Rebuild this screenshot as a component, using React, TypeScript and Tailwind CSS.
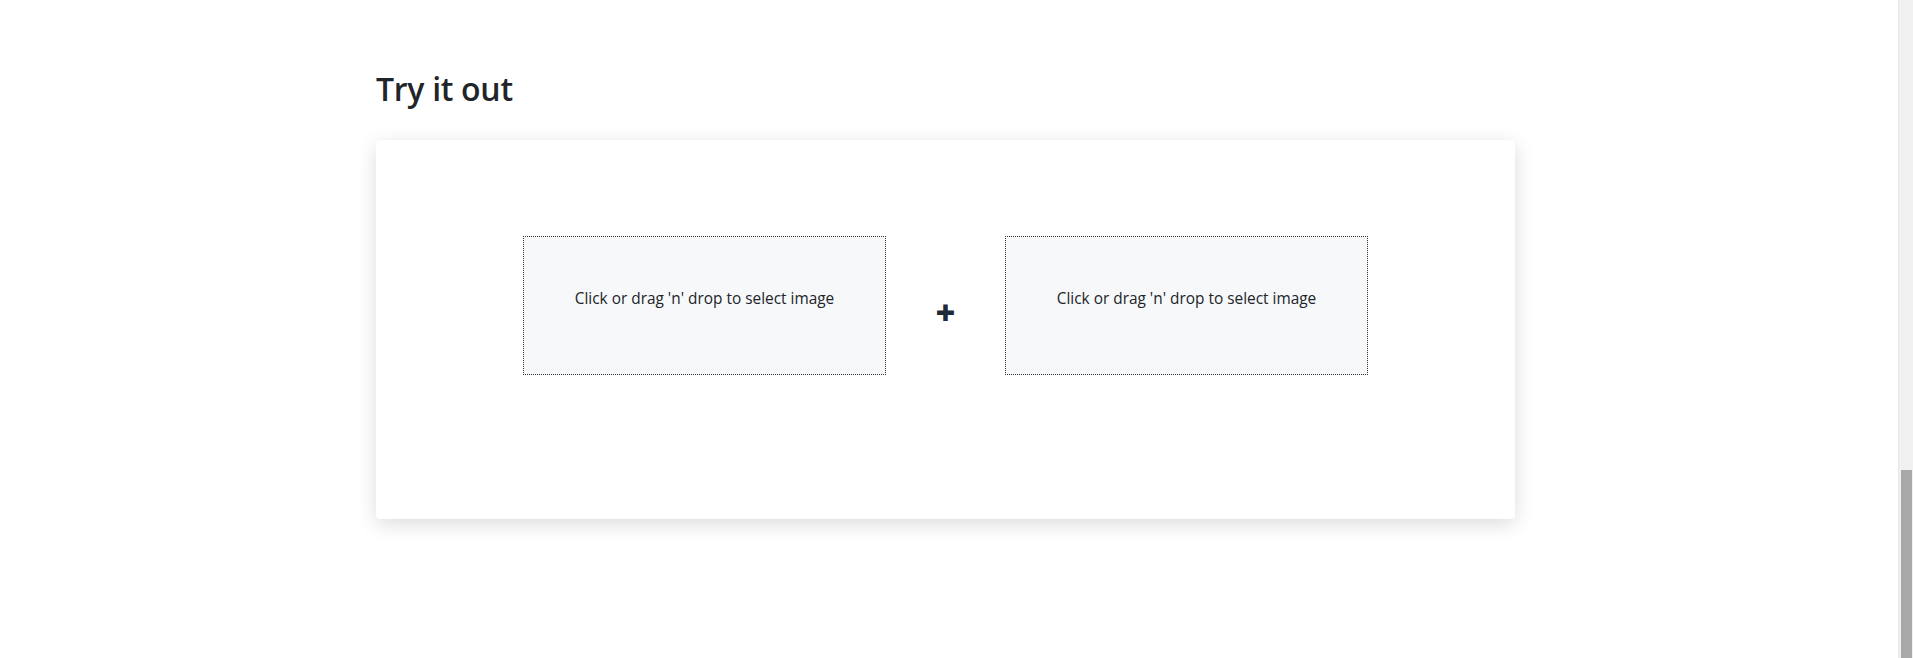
import React from "react";

function DropBox() {
  return (
    <div className="w-[363px] h-[139px] bg-[#f7f8fa] border border-dotted border-[#333333] flex items-center justify-center pb-[14px]">
      <p className="text-[15.4px] text-[#212529]">Click or drag 'n' drop to select image</p>
    </div>
  );
}

export default function App() {
  return (
    <div className="flex w-full h-[658px] bg-white overflow-hidden" style={{ fontFamily: '"Open Sans", "Noto Sans", sans-serif' }}>
      <main className="flex-1 pt-[70px]">
        <div className="ml-[376px] w-[1139px]">
          <h2 className="text-[32px] leading-[38px] font-semibold text-[#212529] tracking-[-0.3px]">Try it out</h2>
          <div className="mt-[32px] h-[379px] bg-white rounded-[4px] shadow-[0_5px_20px_rgba(0,0,0,0.14)] pt-[96px] flex justify-center">
            <div className="flex items-start">
              <DropBox />
              <div className="w-[119px] h-[139px] flex items-center justify-center pt-[13px]">
                <span className="text-[34px] font-extrabold text-[#1f2937] leading-none">+</span>
              </div>
              <DropBox />
            </div>
          </div>
        </div>
      </main>
      <div className="w-[15px] h-full bg-[#f0f0f0] flex flex-col justify-end items-center border-l border-[#e8e8e8]">
        <div className="w-[11px] h-[188px] bg-[#a8a8a8]" />
      </div>
    </div>
  );
}
